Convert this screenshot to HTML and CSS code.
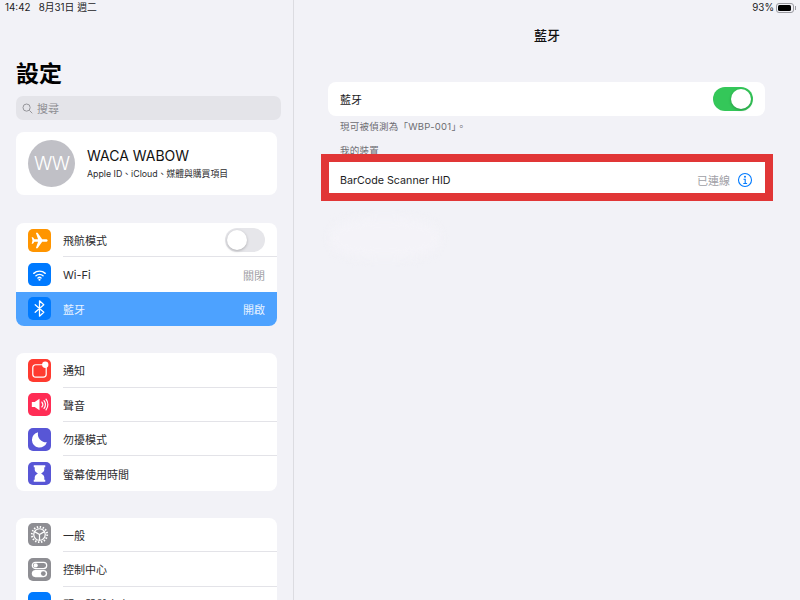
FILE: index.html
```html
<!DOCTYPE html>
<html lang="zh-Hant">
<head>
<meta charset="utf-8">
<title>藍牙</title>
<link rel="stylesheet" href="styles.css">
</head>
<body>
<div class="screen">
  <aside class="sidebar">
    <div class="status">14:42&nbsp;&nbsp; 8月31日 週二</div>
    <h1 class="big-title">設定</h1>
    <div class="search">
      <svg class="search-icon" viewBox="0 0 12 12"><circle cx="5" cy="5" r="3.9"/><path d="M8 8l3.2 3.2"/></svg>
      <span>搜尋</span>
    </div>
    <div class="card profile">
      <div class="avatar">WW</div>
      <div>
        <div class="profile-name">WACA WABOW</div>
        <div class="profile-sub">Apple ID、iCloud、媒體與購買項目</div>
      </div>
    </div>
    <div class="card group">
      <div class="row">
        <span class="icon orange"><svg viewBox="0 0 24 24"><path class="fill" d="M20.5 12c0-.9-.9-1.4-2-1.4h-3.700L10 4H8.200l2.300 6.600H6.700L5.200 8.700H3.800l.9 3.300-.9 3.300h1.400l1.500-1.900h3.800L8.200 20H10l4.800-6.600h3.700c1.100 0 2-.5 2-1.400z"/></svg></span>
        <span class="label">飛航模式</span>
        <span class="switch"><span class="knob"></span></span>
      </div>
      <div class="row">
        <span class="icon blue"><svg viewBox="0 0 24 24"><path class="line wifi" d="M6 10.800a9 9 0 0 1 12 0M8.300 13.300a5.600 5.600 0 0 1 7.400 0M10.400 15.600a2.400 2.400 0 0 1 3.200 0"/><circle class="fill" cx="12" cy="17.500" r="1.100"/></svg></span>
        <span class="label">Wi-Fi</span>
        <span class="value">關閉</span>
      </div>
      <div class="row selected">
        <span class="icon blue"><svg viewBox="0 0 24 24"><path class="line thin" d="M7.500 8l9 8-4.500 4V4l4.500 4-9 8"/></svg></span>
        <span class="label">藍牙</span>
        <span class="value">開啟</span>
      </div>
    </div>
    <div class="card group">
      <div class="row">
        <span class="icon red"><svg viewBox="0 0 24 24"><rect class="line thin" x="5" y="6" width="14" height="13" rx="3"/><circle class="fill" cx="18" cy="6" r="3.300"/></svg></span>
        <span class="label">通知</span>
      </div>
      <div class="row">
        <span class="icon pink"><svg viewBox="0 0 24 24"><path class="fill" d="M4 9.500h3L12 6v12l-5-3.500H4z"/><path class="line thin" d="M14.500 9.500a4 4 0 0 1 0 5M16.700 8a6.500 6.500 0 0 1 0 8M18.800 6.500a9 9 0 0 1 0 11"/></svg></span>
        <span class="label">聲音</span>
      </div>
      <div class="row">
        <span class="icon indigo"><svg viewBox="0 0 24 24"><path class="fill" d="M10.500 4.500a8 8 0 1 0 9.200 10.300A8.500 8.500 0 0 1 10.500 4.500z"/></svg></span>
        <span class="label">勿擾模式</span>
      </div>
      <div class="row">
        <span class="icon indigo"><svg viewBox="0 0 24 24"><path class="fill" d="M6 3.500h12v2h-1v2.500c0 2-2 3-3.300 4 1.300 1 3.300 2 3.300 4v2.500h1v2H6v-2h1V16c0-2 2-3 3.300-4C9 11 7 10 7 8V5.500H6z"/></svg></span>
        <span class="label">螢幕使用時間</span>
      </div>
    </div>
    <div class="card group">
      <div class="row">
        <span class="icon gray"><svg viewBox="0 0 24 24"><circle class="line gear" cx="12" cy="12" r="8"/><circle class="line thin" cx="12" cy="12" r="6"/><path class="line thin" d="M12 12L6.800 9M12 12l5.200-3M12 12v6"/></svg></span>
        <span class="label">一般</span>
      </div>
      <div class="row">
        <span class="icon gray"><svg viewBox="0 0 24 24"><rect class="line thin" x="4.500" y="4.500" width="15" height="6.500" rx="3.250"/><circle class="fill" cx="8" cy="7.750" r="2.200"/><rect class="fill" x="4" y="12.500" width="16" height="7.500" rx="3.750"/><circle class="knob-dark" cx="16" cy="16.250" r="2.500"/></svg></span>
        <span class="label">控制中心</span>
      </div>
      <div class="row">
        <span class="icon blue"></span>
        <span class="label">顯示器與亮度</span>
      </div>
    </div>
  </aside>
  <main class="detail">
    <div class="status status-right">
      <span>93%</span>
      <span class="battery"><span class="battery-level"></span></span>
    </div>
    <h2 class="detail-title">藍牙</h2>
    <div class="smudge"></div>
    <div class="detail-card toggle-row">
      <span class="detail-label">藍牙</span>
      <span class="switch on"><span class="knob"></span></span>
    </div>
    <p class="note">現可被偵測為「WBP-001」。</p>
    <p class="note section-head">我的裝置</p>
    <div class="device-row">
      <span class="detail-label grow">BarCode Scanner HID</span>
      <span class="connected">已連線</span>
      <svg class="info" viewBox="0 0 16 16"><circle cx="8" cy="8" r="6.500"/><path d="M6.500 7.200H8.200V11.500M6.300 11.500h3.800"/><circle class="dot" cx="8" cy="4.800" r="1"/></svg>
    </div>
  </main>
</div>
</body>
</html>
```
FILE: styles.css
```css
* { box-sizing: border-box; }
html, body { margin: 0; height: 100%; }
body {
  font-family: "Inter", "Noto Sans CJK TC", sans-serif;
  color: #1c1c1e;
  background: #f2f2f7;
  overflow: hidden;
}
.screen { display: flex; width: 800px; height: 600px; overflow: hidden; }
.sidebar {
  flex: 0 0 294px;
  height: 600px;
  overflow: hidden;
  padding: 0 16px;
  border-right: 1px solid #dcdce1;
  background: #f2f2f7;
}
.status { height: 15px; font-size: 9.800px; line-height: 15px; color: #1c1c1e; }
.sidebar .status { margin-left: -11px; }
.big-title { margin: 45px 0 0; height: 29px; font-size: 23px; line-height: 29px; font-weight: 700; color: #000; }
.search {
  display: flex; align-items: center; gap: 4px;
  width: 265px; height: 24px; margin-top: 7px; padding-left: 6px;
  border-radius: 7px; background: #e4e4e9; color: #8e8e93; font-size: 11px;
}
.search-icon { width: 11px; height: 11px; fill: none; stroke: #8e8e93; stroke-width: 1; }
.card { width: 261px; background: #fff; border-radius: 8px; overflow: hidden; }
.profile { display: flex; align-items: center; gap: 12px; height: 63px; margin-top: 12px; padding-left: 12px; }
.avatar {
  width: 47px; height: 47px; border-radius: 50%; background: #c0c0c6; color: #fff;
  display: flex; align-items: center; justify-content: center; font-size: 19px; font-weight: 300; letter-spacing: -1px;
}
.profile-name { font-size: 14px; line-height: 18px; color: #111; }
.profile-sub { font-size: 8.800px; line-height: 14px; margin-top: 2px; color: #2c2c2e; }
.group { margin-top: 28px; }
.group + .group { margin-top: 27px; }
.row {
  display: flex; align-items: center; height: 34.400px; padding: 0 12px; position: relative; font-size: 11px;
}
.row + .row::before {
  content: ""; position: absolute; left: 47px; right: 0; top: -1px; height: 1px; background: #e3e3e8;
}
.icon {
  flex: 0 0 23px; width: 23px; height: 23px; border-radius: 5px; margin-right: 12px;
  display: flex; align-items: center; justify-content: center;
}
.icon svg { width: 23px; height: 23px; }
.fill { fill: #fff; }
.line { fill: none; stroke: #fff; stroke-width: 2; stroke-linecap: round; stroke-linejoin: round; }
.thin { stroke-width: 1.300; }
.wifi { stroke-width: 1.500; }
.gear { stroke-width: 2; stroke-dasharray: 1.500 1.640; stroke-linecap: butt; }
.knob-dark { fill: #8e8e93; }
.orange { background: #ff9500; }
.blue { background: #007aff; }
.red { background: #ff3b30; }
.pink { background: #ff2d55; }
.indigo { background: #5856d6; }
.gray { background: #8e8e93; }
.label { flex: 1; color: #2c2c2e; }
.value { color: #a0a0a6; }
.selected { background: #4da2ff; }
.selected .label, .selected .value { color: #e8f2ff; }
.selected::before { display: none; }
.switch {
  width: 40px; height: 24px; border-radius: 12px; background: #e6e6ea; padding: 2px; display: flex; flex: none;
}
.switch.on { background: #34c759; justify-content: flex-end; }
.knob { width: 20px; height: 20px; border-radius: 50%; background: #fff; box-shadow: 0 1px 3px rgba(0,0,0,.25); }
.detail { flex: 1; height: 600px; position: relative; padding-left: 34px; }
.status-right { display: flex; justify-content: flex-end; align-items: center; gap: 2px; padding-right: 6px; }
.battery {
  width: 18px; height: 10px; border: 1px solid #9a9aa0; border-radius: 3px; padding: 1px; display: block; position: relative;
}
.battery::after {
  content: ""; position: absolute; right: -3px; top: 2px; width: 1px; height: 4px; background: #9a9aa0;
}
.battery-level { display: block; width: 93%; height: 100%; background: #000; border-radius: 1.500px; }
.detail-title {
  margin: 11px 0 0 -34px; height: 18px; text-align: center; font-size: 13px; line-height: 18px; font-weight: 500; color: #111;
}
.smudge {
  position: absolute; top: 218px; left: 36px; width: 110px; height: 40px;
  background: #f4f3f8; border-radius: 40%; filter: blur(5px);
}
.detail-card { width: 437px; background: #fff; display: flex; align-items: center; padding: 0 12px; }
.toggle-row { height: 34px; margin-top: 38px; border-radius: 8px; }
.detail-label { font-size: 11px; color: #1c1c1e; }
.toggle-row .detail-label { flex: 1; }
.note { margin: 0; font-size: 9.500px; line-height: 12px; color: #6d6d72; padding-left: 12px; letter-spacing: .25px; }
.toggle-row + .note { margin-top: 5px; }
.section-head { margin-top: 12px; height: 17px; }
.device-row {
  width: 436px; height: 31px; margin-left: 1px; padding: 5px 12px 0 11px;
  background: #fff; display: flex; align-items: center;
  outline: 8px solid #e13636;
}
.device-row .detail-label { font-size: 10.700px; }
.grow { flex: 1; }
.connected { font-size: 11px; color: #a0a0a6; margin-right: 7px; }
.info { width: 16px; height: 16px; fill: none; stroke: #007aff; stroke-width: 1.100; }
.info .dot { fill: #007aff; stroke: none; }
```
